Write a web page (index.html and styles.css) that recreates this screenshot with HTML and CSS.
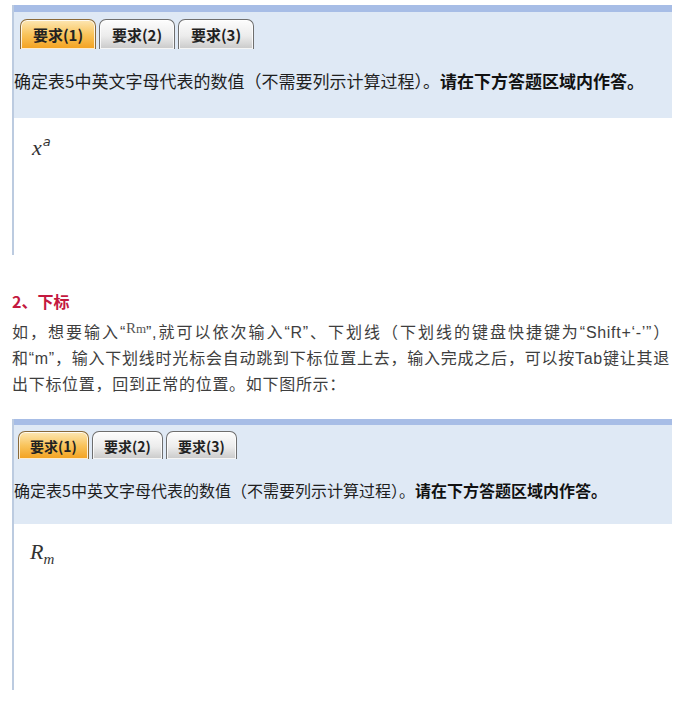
FILE: index.html
```html
<!DOCTYPE html>
<html lang="zh-CN">
<head>
<meta charset="utf-8">
<link rel="stylesheet" href="styles.css">
</head>
<body>
<div class="shot shot-a">
  <div class="topbar"></div>
  <div class="panel">
    <div class="tabs">
      <div class="tab active">要求(1)</div>
      <div class="tab">要求(2)</div>
      <div class="tab">要求(3)</div>
    </div>
    <div class="question">确定表5中英文字母代表的数值（不需要列示计算过程）。<b>请在下方答题区域内作答。</b></div>
  </div>
  <div class="answer">
    <span class="math">x<sup class="sup">a</sup></span>
  </div>
</div>

<h3 class="heading">2、下标</h3>
<p class="para">
  <span class="line">如，想要输入“<span class="rm">R<span class="rm-m">m</span></span>”,就可以依次输入“R”、下划线（下划线的键盘快捷键为“Shift+‘-’”）</span>
  <span class="line">和“m”，输入下划线时光标会自动跳到下标位置上去，输入完成之后，可以按Tab键让其退</span>
  <span class="line last">出下标位置，回到正常的位置。如下图所示：</span>
</p>

<div class="shot shot-b">
  <div class="topbar"></div>
  <div class="panel">
    <div class="tabs">
      <div class="tab active">要求(1)</div>
      <div class="tab">要求(2)</div>
      <div class="tab">要求(3)</div>
    </div>
    <div class="question">确定表5中英文字母代表的数值（不需要列示计算过程）。<b>请在下方答题区域内作答。</b></div>
  </div>
  <div class="answer">
    <span class="math">R<sub class="sub">m</sub></span>
  </div>
</div>
</body>
</html>
```
FILE: styles.css
```css
html, body {
  margin: 0;
  padding: 0;
  background: #ffffff;
}
body {
  font-family: "Noto Sans CJK SC", "Noto Sans", sans-serif;
  color: #333;
}
.shot {
  margin-left: 12px;
  width: 660px;
  border-left: 2px solid #bccbe0;
  box-sizing: border-box;
}
.shot-a {
  margin-top: 5px;
}
.topbar {
  height: 7px;
  background: #a7bde6;
}
.panel {
  background: #dfe9f5;
}
.tabs {
  display: flex;
  gap: 3px;
}
.tab {
  box-sizing: border-box;
  border: 1px solid #6e6e6e;
  border-bottom: none;
  border-radius: 7px 7px 0 0;
  background: linear-gradient(#fdfdfd, #ececec 55%, #c9c9c9);
  box-shadow: inset 0 0 0 1px rgba(255,255,255,0.8);
  font-weight: bold;
  color: #222;
  display: flex;
  align-items: center;
  justify-content: center;
  font-family: "Noto Sans CJK SC", sans-serif;
}
.tab.active {
  background: linear-gradient(#fde7b4, #f9c45c 50%, #f3a11f);
  border-color: #8a6a3a;
}
.question {
  color: #1e1e1e;
  white-space: nowrap;
}
.question b {
  color: #111;
}
.answer {
  background: #ffffff;
}
.math {
  font-family: "Liberation Serif", "DejaVu Serif", serif;
  font-style: italic;
  color: #333;
}

/* shot A metrics */
.shot-a .tabs {
  padding: 7px 0 0 6px;
}
.shot-a .tab {
  width: 76px;
  height: 30px;
  font-size: 15px;
}
.shot-a .question {
  font-size: 17px;
  line-height: 24px;
  padding: 20px 0 25px 0;
}
.shot-a .answer {
  height: 137px;
  padding: 18px 0 0 18px;
  box-sizing: border-box;
}
.shot-a .math {
  font-size: 22px;
  line-height: 22px;
}
.shot-a .sup {
  font-family: "DejaVu Sans", sans-serif;
  font-size: 13px;
  vertical-align: 9px;
  line-height: 0;
  margin-left: 1px;
}

/* text */
.heading {
  margin: 33px 0 0 12px;
  font-size: 16px;
  line-height: 26px;
  font-weight: bold;
  color: #c4193f;
}
.para {
  margin: 1px 0 0 12px;
  width: 658px;
  font-family: "Liberation Sans", "Noto Sans CJK SC", sans-serif;
  font-size: 16px;
  line-height: 26px;
  letter-spacing: 0.7px;
  color: #3e3e3e;
}
.line {
  display: block;
  white-space: nowrap;
  text-align: justify;
  text-align-last: justify;
}
.line.last {
  text-align-last: left;
}
.rm {
  font-family: "Liberation Serif", serif;
  font-size: 15px;
  letter-spacing: 0;
  color: #555;
  vertical-align: 5px;
}
.rm-m {
  font-size: 13px;
}

/* shot B metrics */
.shot-b {
  margin-top: 21px;
}
.shot-b .topbar {
  height: 6px;
}
.shot-b .tabs {
  padding: 6px 0 0 4px;
}
.shot-b .tab {
  width: 71px;
  height: 28px;
  font-size: 14px;
}
.shot-b .question {
  font-size: 16px;
  line-height: 22px;
  padding: 20px 0 23px 0;
}
.shot-b .answer {
  height: 166px;
  padding: 16px 0 0 16px;
  box-sizing: border-box;
}
.shot-b .math {
  font-size: 22px;
  line-height: 24px;
}
.shot-b .sub {
  font-size: 15px;
  vertical-align: -5px;
  line-height: 0;
}
```
